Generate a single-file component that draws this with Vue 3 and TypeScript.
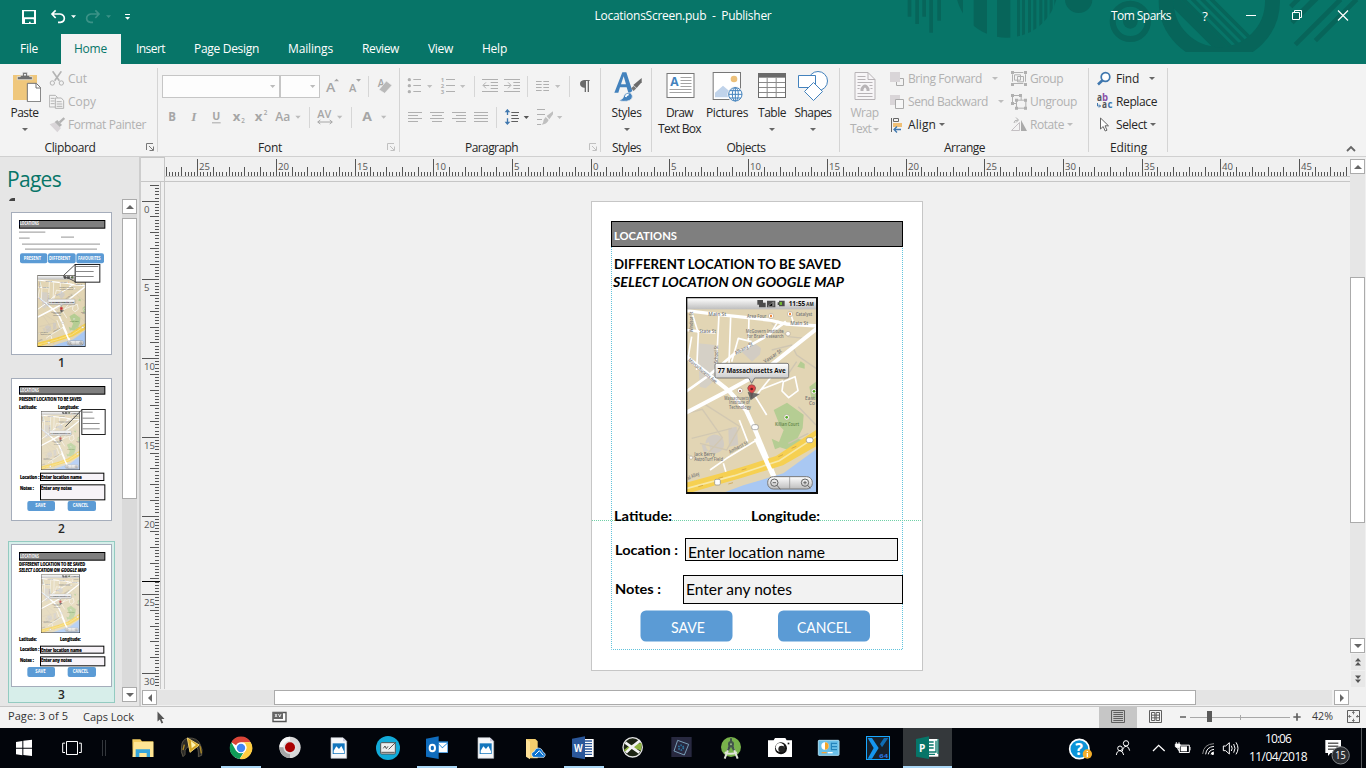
<script setup lang="ts">
import { computed } from 'vue'

/** Spreads the letters of a label so that it takes exactly the given width. */
const vFit = {
  mounted(el: HTMLElement, binding: { value: number }) {
    const chars = (el.textContent ?? '').trim().length
    el.style.letterSpacing = '0px'
    const natural = el.getBoundingClientRect().width
    el.style.letterSpacing = `${(binding.value - natural) / chars}px`
  },
}

/** Lets every measured text inside an svg scale its glyphs rather than only the gaps. */
const vGlyphs = {
  mounted(el: SVGElement) {
    el.querySelectorAll('text[textLength]').forEach((t) => t.setAttribute('lengthAdjust', 'spacingAndGlyphs'))
  },
}

interface Tick { pos: number; kind: 'major' | 'unit' | 'minor'; label: string }

const UNIT = 15.74
function buildTicks(zero: number, from: number, to: number): Tick[] {
  const out: Tick[] = []
  for (let k = Math.ceil((from - zero) / (UNIT / 5)); zero + (k * UNIT) / 5 < to; k++) {
    const major = k % 25 === 0
    out.push({
      pos: Math.floor(zero + (k * UNIT) / 5),
      kind: major ? 'major' : k % 5 === 0 ? 'unit' : 'minor',
      label: major ? String(Math.abs(k / 5)) : '',
    })
  }
  return out
}
const hTicks = computed(() => buildTicks(591.2, 165, 1348))
const vTicks = computed(() => buildTicks(201.2, 183, 687))
const hTop = { major: 159, unit: 167, minor: 172 }
const vLeft = { major: 142, unit: 150, minor: 155 }

const tabs = [
  { name: 'Insert', w: 29 },
  { name: 'Page Design', w: 65 },
  { name: 'Mailings', w: 45 },
  { name: 'Review', w: 37 },
  { name: 'View', w: 25 },
  { name: 'Help', w: 25 },
]
const stripes = [351, 366, 384, 400, 418, 433, 449, 463]
</script>

<template>
  <div class="app">
    <header class="top">
      <svg class="art" width="466" height="64" viewBox="0 0 1398 192">
        <defs>
          <clipPath id="ball"><circle cx="320" cy="-41" r="154" /></clipPath>
          <clipPath id="hoop"><circle cx="958" cy="4" r="138" /></clipPath>
          <clipPath id="band"><rect x="0" y="0" width="1398" height="156" /></clipPath>
        </defs>
        <g fill="#07655a">
          <rect x="23" width="11" height="50" /><rect x="46" width="11" height="72" />
          <rect x="67" width="11" height="50" /><rect x="88" width="11" height="98" />
          <rect x="112" width="11" height="62" />
          <g clip-path="url(#ball)">
            <rect x="163" width="26" height="120" /><rect x="221" width="40" height="120" />
            <rect x="291" width="40" height="120" />
            <rect v-for="x in stripes" :key="x" :x="x" width="9" height="120" />
          </g>
          <circle cx="536" cy="-2" r="41" />
          <circle cx="691" cy="64" r="22" />
        </g>
        <g fill="none" stroke="#07655a" clip-path="url(#band)">
          <circle cx="691" cy="64" r="53" stroke-width="18" />
          <circle cx="958" cy="4" r="159.500" stroke-width="45" />
          <g clip-path="url(#hoop)" stroke-width="11">
            <path d="M800 -20l170 170" stroke-width="34" />
            <path d="M822 -30l190 190M850 -30l190 190M878 -30l190 190M906 -30l190 190" />
          </g>
          <path d="M1172 20l28-28M1178 62l64-64M1186 134l136-136M1176 68l90-88M1246 122l124-124" stroke-width="14" />
        </g>
      </svg>
      <div class="titlebar">
        <svg class="qat" width="120" height="32" viewBox="54 0 360 96">
          <path d="M66 30h42v42h-42zM72 34v18h30v-18zM75 58v11h6v-7h14v7h6v-11z" fill="#fff" fill-rule="evenodd" />
          <path d="M81 69h6v-4h5v4h9v-10h-26v10z" fill="#077568" />
          <g fill="none" stroke="#fff" stroke-width="5">
            <path d="M156 42h24q13 2 13 13t-12 12h-7M167 31l-11 11 11 12" />
            <path d="M297 42h-24q-13 2-13 13t12 12h7M286 31l11 11-11 12" stroke="#3b9287" />
          </g>
          <path d="M213 46h15l-7 8z" fill="#fff" /><path d="M318 46h15l-7 8z" fill="#3b9287" />
          <path d="M375 42h15v3h-15zM375 51h15l-7 8z" fill="#fff" />
        </svg>
        <div class="title"><span v-fit="177">LocationsScreen.pub&nbsp; -&nbsp; Publisher</span></div>
        <div class="window">
          <span class="user"><span v-fit="60">Tom Sparks</span></span>
          <span class="wbtn q">?</span>
          <svg class="wbtn" width="46" height="32"><path d="M18 15.500h10" stroke="#fff" /></svg>
          <svg class="wbtn" width="46" height="32"><path d="M18.500 12.500h7v7h-7zM20.500 12v-1.500h7v7h-1.500" stroke="#fff" fill="none" /></svg>
          <svg class="wbtn" width="46" height="32"><path d="M18 10.500l10 10M28 10.500l-10 10" stroke="#fff" stroke-width="1.200" /></svg>
        </div>
      </div>
      <nav class="tabs">
        <span class="file"><span v-fit="18">File</span></span>
        <span class="home"><span v-fit="33">Home</span></span>
        <span v-for="t in tabs" :key="t.name" class="tab"><span v-fit="t.w">{{ t.name }}</span></span>
      </nav>
    </header>

    <section class="ribbon">
      <div class="group g-clip">
        <div class="body">
          <div class="big paste">
            <svg width="32" height="32" viewBox="27 210 96 96">
              <rect x="39" y="225" width="72" height="75" fill="#efc77c" />
              <path d="M52 239v-9h9v-4h7v-9h14v9h7v4h8v9z" fill="#6e6e6e" stroke="#f3f3f3" stroke-width="2" />
              <circle cx="75" cy="224" r="3" fill="#fff" />
              <path d="M82 250h27l13 13v42h-40z" fill="#fff" stroke="#737373" stroke-width="3" />
              <path d="M108 250v14h14" fill="none" stroke="#737373" stroke-width="3" />
            </svg>
            <span class="lab"><span v-fit="28">Paste</span></span>
            <span class="sub"><i class="arr"></i></span>
          </div>
          <div class="rows off">
            <div class="row">
              <svg width="16" height="16" viewBox="147 211 48 48"><path d="M158 212l20 28M184 212l-20 28" stroke="#b3b3b3" stroke-width="5" /><circle cx="157" cy="247" r="6.500" fill="none" stroke="#b3b3b3" stroke-width="3" /><circle cx="184" cy="247" r="6.500" fill="none" stroke="#b3b3b3" stroke-width="3" /></svg>
              <span v-fit="19">Cut</span>
            </div>
            <div class="row">
              <svg width="16" height="16" viewBox="147 280 48 48" fill="#f3f3f3" stroke="#b3b3b3" stroke-width="3"><path d="M148 284h18l6 6v29h-24zM152 293h12M152 301h12M152 309h12" /><path d="M166 292h18l7 8v23h-25zM170 303h15M170 310h17M170 317h17" /></svg>
              <span v-fit="28">Copy</span>
            </div>
            <div class="row">
              <svg width="16" height="16" viewBox="147 348 48 48"><path d="M149 370l16-6 18 17-11 13z" fill="#d9d5d8" /><path d="M164 363l8-6 14 15-7 6z" fill="#b3b3b3" /><path d="M179 364l14-13" stroke="#b3b3b3" stroke-width="7" /></svg>
              <span v-fit="78">Format Painter</span>
            </div>
          </div>
        </div>
        <div class="cap"><span class="ct"><span v-fit="51">Clipboard</span></span>
          <svg width="18" height="12" viewBox="-6 -1 18 12" fill="none" stroke="#777"><path d="M.5 7v-6.500h6.500M3 3l4 4M7.500 3.500v4h-4" /></svg></div>
      </div>

      <div class="group g-font">
        <div class="body">
          <svg v-glyphs width="241" height="76" viewBox="474 192 723 228" class="strip">
            <rect x="487.500" y="226.500" width="351" height="66" fill="#fdfdfd" stroke="#c6c6c6" stroke-width="3" />
            <rect x="841.500" y="226.500" width="117" height="66" fill="#fdfdfd" stroke="#c6c6c6" stroke-width="3" />
            <path d="M1105.500 228v63M928.500 321v63M1054.500 321v63" stroke="#d6d6d6" stroke-width="3" />
            <g fill="#bcbcbc"><path d="M810 255h16l-8 9zM930 255h16l-8 9zM886 347h16l-8 9zM1011 347h16l-8 9zM1143 347h16l-8 9z" /></g>
            <g fill="#a6a6a6" font-weight="600">
              <text x="978" y="276" font-size="40" textLength="28">A</text>
              <path d="M1002 244h15l-7-8zM1068 237h15l-7 8z" />
              <text x="1047" y="276" font-size="32" textLength="22">A</text>
              <text x="1133" y="262" font-size="32" textLength="20">A</text>
              <path d="M1137 269l22-26 17 13-22 24z" fill="#b9b9b9" stroke="#f3f3f3" stroke-width="2" />
              <text x="505" y="363" font-size="36" font-weight="700" textLength="23">B</text>
              <text x="574" y="363" font-size="40" font-style="italic" class="serif">I</text>
              <text x="637" y="361" font-size="34" font-weight="700" textLength="24">U</text>
              <path d="M636 368.500h26" stroke="#a6a6a6" stroke-width="3" />
              <text x="698" y="364" font-size="38" font-weight="700" textLength="23">x</text><text x="724" y="369" font-size="19">2</text>
              <text x="764" y="364" font-size="38" font-weight="700" textLength="23">x</text><text x="791" y="346" font-size="19">2</text>
              <text x="826" y="363" font-size="36" textLength="45">Aa</text>
              <text x="952" y="355" font-size="33" textLength="42">AV</text>
              <path d="M954 366h42M961 360l-8 6 8 6M989 360l8 6-8 6" fill="none" stroke="#a6a6a6" stroke-width="3" />
              <text x="1087" y="363" font-size="39" font-weight="700" textLength="29">A</text>
            </g>
          </svg>
        </div>
        <div class="cap"><span class="ct"><span v-fit="24">Font</span></span>
          <svg width="18" height="12" viewBox="-5 -1 18 12" fill="none" stroke="#c0c0c0"><path d="M.5 7v-6.500h6.500M3 3l4 4M7.500 3.500v4h-4" /></svg></div>
      </div>

      <div class="group g-para">
        <div class="body">
          <svg width="200" height="76" viewBox="0 12 600 228" class="strip">
            <g fill="#b0b0b0">
              <circle cx="28" cy="59" r="5" /><circle cx="28" cy="77" r="5" /><circle cx="28" cy="95" r="5" />
              <g font-size="18" font-weight="700"><text x="122" y="65">1</text><text x="122" y="83">2</text><text x="122" y="101">3</text></g>
            </g>
            <g stroke="#b0b0b0" stroke-width="3" fill="none">
              <path d="M40 58.500h23M40 76.500h23M40 94.500h23M138 58.500h27M138 76.500h27M138 94.500h27" />
              <path d="M246 58.500h48M272 67.500h22M272 76.500h22M272 85.500h22M246 94.500h48M250 76.500h18M258 67l-9 9 9 9" />
              <path d="M312 58.500h48M340 67.500h20M340 76.500h20M340 85.500h20M312 94.500h48M312 76.500h20M324 67l9 9-9 9" />
              <path d="M408 64.500h17M430 64.500h17M408 73.500h17M430 73.500h17M408 82.500h17M430 82.500h17M408 91.500h17M430 91.500h17" />
              <path d="M24 157.500h42M24 166.500h30M24 175.500h42M24 184.500h30M90 157.500h42M96 166.500h30M90 175.500h42M96 184.500h30M156 157.500h42M168 166.500h30M156 175.500h42M168 184.500h30M222 157.500h42M222 166.500h42M222 175.500h42M222 184.500h42" />
              <path d="M411 148.500h24M411 163.500h24M411 178.500h15M411 193.500h12" />
              <path d="M223.500 48v63M382.500 48v63M508.500 48v63M289.500 141v63" stroke="#d6d6d6" />
              <path d="M334 157.500h23M334 166.500h20M334 175.500h23M334 184.500h20" stroke="#5f5f5f" />
              <path d="M322.500 149v16M322.500 175v16" stroke="#3f77ae" stroke-width="4" />
            </g>
            <path d="M314 157l8-10 9 10zM314 185l8 10 9-10z" fill="#3f77ae" />
            <path d="M459 154l-19 14 8 10 11-15zM437 171l9 9q-6 14-22 14 7-6 7-15z" fill="#bfbfbf" />
            <path d="M81 75h16l-8 9zM180 75h16l-8 9zM465 75h16l-8 9zM471 168h16l-8 9z" fill="#c0c0c0" />
            <path d="M371 168h16l-8 9z" fill="#555" />
            <path d="M569 60h-17q-12 2-12 11t12 12h2v13h4v-33h5v33h4v-33h2z" fill="#6a6a6a" />
          </svg>
        </div>
        <div class="cap"><span class="ct"><span v-fit="53">Paragraph</span></span>
          <svg width="18" height="12" viewBox="-6 -1 18 12" fill="none" stroke="#c0c0c0"><path d="M.5 7v-6.500h6.500M3 3l4 4M7.500 3.500v4h-4" /></svg></div>
      </div>

      <div class="group g-styles">
        <div class="body center">
          <div class="big">
            <svg width="32" height="32" viewBox="631 30 96 96">
              <path d="M641 98l24-61h12l18 56-11 8-6-19h-20l-5 16zM661 73h15l-7-24z" fill="#4382bd" fill-rule="evenodd" />
              <path d="M723 54v13l-15 17-10-9z" fill="#6b6b6b" /><path d="M699 78l8 7-8 8-8-8z" fill="#777" />
              <path d="M655 122q14-5 15-16 8-12 20-7 9 9 3 17-11 12-38 6z" fill="#4382bd" stroke="#f3f3f3" stroke-width="2" />
              <path d="M675 111q2-8 9-7" stroke="#fff" stroke-width="5" fill="none" />
            </svg>
            <span class="lab"><span v-fit="30">Styles</span></span>
            <span class="sub"><i class="arr"></i></span>
          </div>
        </div>
        <div class="cap"><span class="ct"><span v-fit="29">Styles</span></span></div>
      </div>

      <div class="group g-obj">
        <div class="body">
          <div class="big b47">
            <svg v-glyphs width="32" height="32" viewBox="790.500 30 96 96">
              <rect x="799.500" y="40.500" width="81" height="72" fill="#fff" stroke="#777" stroke-width="3" />
              <path d="M840 52.500h33M840 61.500h33M840 70.500h33M840 79.500h33M807 88.500h66M807 97.500h66" stroke="#a3a3a3" stroke-width="3" />
              <text x="809" y="78" font-size="36" font-weight="700" fill="#4382bd" textLength="25">A</text>
            </svg>
            <span class="lab"><span v-fit="27">Draw</span></span><span class="sub"><span v-fit="43">Text Box</span></span>
          </div>
          <div class="big b48">
            <svg width="32" height="32" viewBox="933 30 96 96">
              <rect x="939.500" y="37.500" width="82" height="81" fill="#fff" stroke="#777" stroke-width="3" />
              <circle cx="1002" cy="57" r="10" fill="#ecc07a" />
              <path d="M945 112v-14l24-21 16 14 9-5v26z" fill="#c0d3ea" />
              <circle cx="1006" cy="103" r="24" fill="#f3f3f3" />
              <g fill="#fff" stroke="#4382bd" stroke-width="3"><circle cx="1006" cy="103" r="20" /><ellipse cx="1006" cy="103" rx="9" ry="20" /><path d="M986 103h40M990 92h32M990 114h32M1006 83v40" /></g>
            </svg>
            <span class="lab"><span v-fit="42">Pictures</span></span><span class="sub"></span>
          </div>
          <div class="big b42">
            <svg width="32" height="32" viewBox="1068 30 96 96">
              <rect x="1075.500" y="40.500" width="81" height="72" fill="#fff" stroke="#6b6b6b" stroke-width="3" />
              <rect x="1074" y="39" width="84" height="14" fill="#6b6b6b" />
              <path d="M1077 67.500h78M1077 82.500h78M1077 97.500h78M1101.500 53v58M1128.500 53v58" stroke="#8a8a8a" stroke-width="3" />
            </svg>
            <span class="lab"><span v-fit="28">Table</span></span><span class="sub"><i class="arr"></i></span>
          </div>
          <div class="big b40">
            <svg width="32" height="32" viewBox="797 70 32 32" fill="#fff" stroke="#4382bd">
              <circle cx="818" cy="81" r="9.500" /><path d="M798.500 75.500h17v12h-17z" /><path d="M813.500 82.500l9 9-9 9-9-9z" />
            </svg>
            <span class="lab"><span v-fit="37">Shapes</span></span><span class="sub"><i class="arr"></i></span>
          </div>
        </div>
        <div class="cap"><span class="ct"><span v-fit="39">Objects</span></span></div>
      </div>

      <div class="group g-arr">
        <div class="body">
          <div class="big b41 off">
            <svg width="32" height="32" viewBox="848.500 70 32 32" fill="none" stroke="#b7b3b6">
              <path d="M854.500 72.500h13l7 7v20h-20z" fill="#f7f5f7" /><path d="M867.500 72.500v7h7M857 76.500h8M857 79.500h8M857 82.500h15M857 85.500h3M869 85.500h3M857 88.500h2M870 88.500h2M857 93.500h15M857 96.500h15" />
              <path d="M861.500 91v-2q3-6 6 0v2" stroke-width="3" />
            </svg>
            <span class="lab"><span v-fit="28">Wrap</span></span><span class="sub"><span v-fit="21">Text</span><i class="arr inl"></i></span>
          </div>
          <div class="rows c1">
            <div class="row off">
              <svg width="16" height="16"><path d="M1 1h10v10h-10z" fill="#d9d5d8" /><path d="M11 7.500h3.500v7h-7v-3.500" fill="none" stroke="#aaa" /></svg>
              <span v-fit="74">Bring Forward</span><i class="arr gap"></i>
            </div>
            <div class="row off">
              <svg width="16" height="16"><path d="M1 1h10v10h-10z" fill="#d9d5d8" /><path d="M6.500 5.500h8v9h-8z" fill="#f7f7f7" stroke="#aaa" /></svg>
              <span v-fit="80">Send Backward</span><i class="arr gap"></i>
            </div>
            <div class="row">
              <svg width="16" height="16"><path d="M2.500 1v14M4.500 1.500h5v3h-5z" stroke="#666" fill="none" /><path d="M4 6h9v4h-9z" fill="#efc077" /><path d="M5 12.500h7M8 9.500l-3 3 3 3" stroke="#3f77ae" fill="none" stroke-width="1.300" /></svg>
              <span v-fit="28">Align</span><i class="arr"></i>
            </div>
          </div>
          <div class="rows c2 off">
            <div class="row">
              <svg width="18" height="16" viewBox="30 21 54 48" fill="none" stroke="#b0b0b0" stroke-width="3"><path d="M42 25.500h28M42 58.500h28M37.500 31v22M76.500 31v22M43.500 32.500h18v16h-18zM52.500 37.500h18v16h-18z" /><path d="M33 18h9v9h-9zM72 18h9v9h-9zM33 54h9v9h-9zM72 54h9v9h-9z" transform="translate(0 3)" fill="#b0b0b0" stroke="none" /></svg>
              <span v-fit="33">Group</span>
            </div>
            <div class="row">
              <svg width="18" height="16" viewBox="30 87 54 48" fill="none" stroke="#b0b0b0" stroke-width="3"><path d="M37.500 91.500h26v24h-26z" /><path d="M49.500 105.500h28v24h-28z" fill="#f3f3f3" /><path d="M33 87h9v9h-9zM57 87h9v9h-9zM33 111h9v9h-9zM45 101h9v9h-9zM72 101h9v9h-9zM45 125h9v9h-9zM72 125h9v9h-9z" fill="#b0b0b0" stroke="none" /></svg>
              <span v-fit="47">Ungroup</span>
            </div>
            <div class="row">
              <svg width="18" height="16"><path d="M1.500 13.500h8v-8z" fill="none" stroke="#c4c0c3" /><path d="M11 3v11h6z" fill="#aaa" /><path d="M4 6q0-3 4-3M6 .5l2.500 2.500-2.500 2.500" fill="none" stroke="#b0b0b0" /></svg>
              <span v-fit="34">Rotate</span><i class="arr"></i>
            </div>
          </div>
        </div>
        <div class="cap"><span class="ct"><span v-fit="41">Arrange</span></span></div>
      </div>

      <div class="group g-edit">
        <div class="body">
          <div class="rows">
            <div class="row"><svg width="18" height="16"><circle cx="9.500" cy="6" r="4.300" fill="#fff" stroke="#3f77ae" stroke-width="1.700" /><path d="M6.500 9.200l-4.500 4.300" stroke="#3f77ae" stroke-width="2.600" /></svg><span v-fit="23">Find</span><i class="arr gap"></i></div>
            <div class="row"><svg v-glyphs width="18" height="20" font-weight="700" font-size="11"><text x="1" y="9" fill="#555" textLength="5">a</text><text x="6" y="9" fill="#8a4fa8" textLength="6">b</text><text x="6" y="16" fill="#555" textLength="5">a</text><text x="11.500" y="16" fill="#3f77ae" textLength="5">c</text><path d="M1.500 11v3h3M3 12.500l1.500 1.500-1.500 1.500" fill="none" stroke="#3f77ae" /></svg><span v-fit="41">Replace</span></div>
            <div class="row"><svg width="18" height="16"><path d="M4.500 1v11l2.700-2.500 2 4.500 1.800-.8-2-4.400h3.500z" fill="#fff" stroke="#666" /></svg><span v-fit="31">Select</span><i class="arr"></i></div>
          </div>
        </div>
        <div class="cap"><span class="ct"><span v-fit="37">Editing</span></span></div>
      </div>
      <div class="tail"><svg width="12" height="9"><path d="M2 7l4-4 4 4" fill="none" stroke="#666" stroke-width="1.800" /></svg></div>
    </section>

    <main class="work">
      <aside class="pages">
        <div class="plist">
          <h2><span v-fit="54">Pages</span></h2>
          <svg class="mark" width="10" height="5"><path d="M1 4q1-3 4-3h2v3z" fill="#444" /></svg>
          <div class="thumb">
            <svg v-glyphs width="101" height="143" viewBox="33 171 303 429" font-weight="700">
              <rect x="34.500" y="172.500" width="300" height="426" fill="#fff" stroke="#a5adbb" stroke-width="3" />
              <rect x="58.500" y="196.500" width="256" height="23" fill="#7f7f7f" stroke="#000" stroke-width="3" />
              <text x="60" y="211" font-size="14" fill="#fff" textLength="56">LOCATIONS</text>
              <path d="M57 231.500h79M57 249.500h32M183 246.500h39M66 267.500h234M75 282.500h216" stroke="#aaa" stroke-width="3.500" />
              <g fill="#5b9bd5"><rect x="60" y="295" width="82" height="30" rx="6" /><rect x="144" y="295" width="83" height="30" rx="6" /><rect x="229" y="295" width="83" height="30" rx="6" /></g>
              <g font-size="14" fill="#fff"><text x="71" y="314" textLength="52">PRESENT</text><text x="147" y="314" textLength="64">DIFFERENT</text><text x="234" y="314" textLength="68">FAVOURITES</text></g>
              <use href="#map" x="112" y="360" width="145" height="216" />
              <path d="M225 329l-35 33 40 20" fill="none" stroke="#555" stroke-width="3" />
              <rect x="225.500" y="328.500" width="74" height="53" fill="#fff" stroke="#222" stroke-width="3" />
              <path d="M227 334.500h68M228 349.500h53M228 364.500h53" stroke="#888" stroke-width="3" />
            </svg>
            <b>1</b>
          </div>
          <div class="thumb">
            <svg v-glyphs width="101" height="143" viewBox="33 -156 303 429" font-weight="700">
              <rect x="34.500" y="-154.500" width="300" height="426" fill="#fff" stroke="#a5adbb" stroke-width="3" />
              <rect x="58.500" y="-130.500" width="256" height="23" fill="#7f7f7f" stroke="#000" stroke-width="3" />
              <text x="60" y="-115" font-size="14" fill="#fff" textLength="56">LOCATIONS</text>
              <g font-size="13" class="heavy"><text x="57" y="-87" textLength="188">PRESENT LOCATION TO BE SAVED</text><text x="57" y="-64" textLength="53">Latitude:</text><text x="174" y="-64" textLength="62">Longitude:</text></g>
              <use href="#map" x="123" y="-57" width="117" height="177" opacity=".8" />
              <path d="M245 -60l-49 50" stroke="#555" stroke-width="3" />
              <rect x="245.500" y="-61.500" width="70" height="75" fill="#fff" stroke="#222" stroke-width="3" />
              <path d="M247 -53.500h31M247 -35.500h36M247 -19.500h52M247 -3.500h52" stroke="#888" stroke-width="3" />
              <g fill="#f7f3f8" stroke="#000" stroke-width="3"><rect x="121.500" y="129.500" width="190" height="22" /><rect x="121.500" y="164.500" width="193" height="45" /></g>
              <g font-size="13" class="heavy"><text x="60" y="146" textLength="58">Location :</text><text x="60" y="179" textLength="42">Notes :</text><text x="123" y="147" textLength="122">Enter location name</text><text x="123" y="179" textLength="92">Enter any notes</text></g>
              <g fill="#5b9bd5"><rect x="82" y="213" width="83" height="30" rx="6" /><rect x="203" y="213" width="85" height="30" rx="6" /></g>
              <g font-size="14" fill="#fff"><text x="106" y="232" textLength="31">SAVE</text><text x="218" y="232" textLength="47">CANCEL</text></g>
            </svg>
            <b>2</b>
          </div>
          <div class="thumb sel">
            <svg v-glyphs width="101" height="143" viewBox="33 342 303 429" font-weight="700">
              <rect x="34.500" y="343.500" width="300" height="426" fill="#fff" stroke="#a5adbb" stroke-width="3" />
              <rect x="58.500" y="367.500" width="256" height="23" fill="#7f7f7f" stroke="#000" stroke-width="3" />
              <text x="60" y="384" font-size="14" fill="#fff" textLength="56">LOCATIONS</text>
              <g font-size="13" class="heavy"><text x="57" y="407" textLength="198">DIFFERENT LOCATION TO BE SAVED</text><text x="57" y="425" font-style="italic" textLength="202">SELECT LOCATION ON GOOGLE MAP</text><text x="57" y="633" textLength="53">Latitude:</text><text x="180" y="633" textLength="62">Longitude:</text></g>
              <use href="#map" x="123" y="433" width="117" height="176" opacity=".8" />
              <g fill="#f7f3f8" stroke="#000" stroke-width="3"><rect x="121.500" y="648.500" width="190" height="21" /><rect x="121.500" y="680.500" width="193" height="27" /></g>
              <g font-size="13" class="heavy"><text x="60" y="662" textLength="58">Location :</text><text x="60" y="697" textLength="42">Notes :</text><text x="123" y="665" textLength="122">Enter location name</text><text x="123" y="697" textLength="92">Enter any notes</text></g>
              <g fill="#5b9bd5"><rect x="82" y="711" width="83" height="30" rx="6" /><rect x="203" y="711" width="85" height="30" rx="6" /></g>
              <g font-size="14" fill="#fff"><text x="106" y="730" textLength="31">SAVE</text><text x="218" y="730" textLength="47">CANCEL</text></g>
            </svg>
            <b>3</b>
          </div>
        </div>
        <div class="pscroll">
          <span class="sbtn"><i class="up"></i></span>
          <div class="ptrack"><div class="pthumb"></div></div>
          <span class="sbtn"><i class="down"></i></span>
        </div>
      </aside>

      <div class="editor">
        <svg class="hruler" width="1209" height="25" viewBox="141 157 1209 25" shape-rendering="crispEdges">
          <path d="M141 157.500h24M164.500 157v25M141 181.500h1209M165 176.500h1185" stroke="#c6c6c6" fill="none" />
          <path v-for="(t, i) in hTicks" :key="i" :d="`M${t.pos + 0.5} ${hTop[t.kind]}V176`" stroke="#555" />
          <text v-for="(t, i) in hTicks.filter((x) => x.label)" :key="'l' + i" :x="t.pos + 2" y="169.500" font-size="9.600" fill="#555">{{ t.label }}</text>
        </svg>
        <div class="mid">
          <svg class="vruler" width="24" height="507" viewBox="141 182 24 507" shape-rendering="crispEdges">
            <path d="M160.500 182v507M164.500 182v507" stroke="#c6c6c6" />
            <path v-for="(t, i) in vTicks" :key="i" :d="`M${vLeft[t.kind]} ${t.pos + 0.5}H159`" stroke="#555" />
            <path d="M142 581.500h18" stroke="#000" />
            <text v-for="(t, i) in vTicks.filter((x) => x.label)" :key="'l' + i" x="144" :y="t.pos + 12" font-size="9.600" fill="#555">{{ t.label }}</text>
          </svg>
          <div class="canvas">
            <svg v-glyphs class="sheet" width="332" height="470" viewBox="591 201 332 470">
              <defs>
                <linearGradient id="bar" x1="0" y1="0" x2="0" y2="1"><stop offset="0" stop-color="#fff" /><stop offset="1" stop-color="#bdbdbd" /></linearGradient>
              </defs>
              <symbol id="map" viewBox="303 321 396 591" preserveAspectRatio="none">
                <rect x="303" y="321" width="396" height="591" fill="#e2d5b4" />
                <path d="M338 460l52 5-3 30 25 55-50 45-18-5z" fill="#d5d0c6" />
                <path d="M470 485l30-32 28 22-3 18-24 22zM350 765l22-8 4 24-20 6zM398 735a28 28 0 1 0 3 52 28 28 0 0 0-3-52zM430 715l25-5 5 55-28 5z" fill="#d2ccc3" />
                <path d="M307 670l45-12 60 85-65 70-40-20M355 640l110 70-40 70-80-20M320 745l120-30" fill="none" stroke="#d2c8b2" stroke-width="4" />
                <path d="M566 660l40-22 50 36-3 40-16 32 17 4-44 30-25-8-15 6-10-32 22 10 14-36-10-10z" fill="#b5cd93" />
                <path d="M637 530l10-16 12 8v14zM693 575l-20 15 6 35 14 5z" fill="#b5cd93" />
                <g fill="none" stroke="#cfc6b2" stroke-width="4"><path d="M560 480l60-15 15 30 58 40M590 580l45-65M610 760l60-30M640 650l53 55M560 400l50 40 50 5" /></g>
                <g fill="none" stroke="#fff" stroke-linejoin="round">
                  <path d="M303 362l100 12 150 16 50 12 96 6" stroke-width="10" />
                  <path d="M303 668l130-68 100-55 166-132" stroke-width="12" />
                  <path d="M303 605l70-50 70-60 90-50 70-50M303 420l46 5 42 2" stroke-width="8" />
                  <path d="M303 500l128 102 52 58 30 66 62 150" stroke-width="13" />
                  <path d="M320 365l20 65-5 110M402 372l-10 200M437 382l-5 140M492 380l-2 75M320 440l-12 70M580 392l-30 50M618 375l10 30M500 455l-40-10-20 70" stroke-width="5" />
                  <path d="M505 610l40 65M525 600l70-28M595 575l35-15 9 42-28 21-20-20zM463 690l25 65M375 840l50-35 90-55M415 820l12 40M515 615l50-62" stroke-width="5" />
                </g>
                <path d="M303 878l110-30 75-22 85-28 126-82v50l-105 60-125 38-85 24-81 24z" fill="#f6d051" />
                <path d="M303 896l145-39 135-45 116-76" fill="none" stroke="#f7e8a7" stroke-width="5" />
                <path d="M405 912l70-26 120-36 104-76v138z" fill="#a9c8f3" />
                <path d="M513 745l59 130" stroke="#fff" stroke-width="13" />
                <g stroke="#c7983f" stroke-width="2"><path d="M400 865l14-4M470 840l14-4M580 800l14-6M620 775l14-6M430 882l14-4M340 890l14-4" /></g>
                <g fill="#777" font-size="16" font-weight="600">
                  <text x="370" y="379" textLength="54">Main St</text><text x="486" y="384" textLength="58">Area Four</text><text x="632" y="379" textLength="50">Catalyst</text>
                  <text x="616" y="404" textLength="54">Main St</text><text x="343" y="428" textLength="50">State St</text><text x="482" y="428" textLength="114">McGovern Institute</text><text x="486" y="443" textLength="110">for Brain Research</text>
                  <text x="418" y="629" textLength="76">Massachusetts</text><text x="432" y="643" textLength="62">Institute of</text><text x="432" y="658" textLength="66">Technology</text>
                  <text x="570" y="709" textLength="72" fill="#608345">Killian Court</text><text x="328" y="799" textLength="62">Jack Berry</text><text x="328" y="814" textLength="86">AstroTurf Field</text><text x="660" y="629" textLength="30">East</text><text x="672" y="645" textLength="18">Co</text>
                  <text transform="translate(453 495) rotate(-30)" textLength="60">Albany St</text><text transform="translate(540 520) rotate(-34)" textLength="62">Vassar St</text><text transform="translate(308 512) rotate(40)" textLength="108">Massachusetts Ave</text>
                  <text transform="translate(324 427) rotate(-90)" textLength="62">Windsor St</text><text transform="translate(398 520) rotate(-90)" textLength="54">School St</text><text transform="translate(435 791) rotate(-28)" textLength="62">Amherst St</text><text transform="translate(310 870) rotate(-24)" textLength="38">al Alley</text>
                </g>
                <g fill="#fff" stroke="#b5aa95" stroke-width="2"><circle cx="558" cy="378" r="8" /><circle cx="615" cy="372" r="8" /><circle cx="609" cy="431" r="7" /><circle cx="465" cy="602" r="8" /><circle cx="605" cy="682" r="8" /><circle cx="687" cy="604" r="8" /><circle cx="318" cy="803" r="5" /><rect x="389" y="868" width="17" height="17" rx="4" stroke="#888" /><rect x="500" y="704" width="20" height="15" rx="6" stroke="#888" /><rect x="664" y="743" width="20" height="15" rx="6" stroke="#888" /></g>
                <g fill="#ee8b3e"><path d="M555 374h6v8h-6zM612 368h6v8h-6z" /><circle cx="465" cy="603" r="3" fill="#8b3c33" /><circle cx="605" cy="682" r="4" fill="#4ea51d" /><circle cx="687" cy="604" r="4" fill="#4ea51d" /></g>
                <path d="M488 594q2-10 12-10t12 10q0 7-9 16l-3 14-3-14q-9-9-9-16z" fill="#e04545" stroke="#79494a" stroke-width="2" />
                <circle cx="500" cy="597" r="4" fill="#661d1d" /><path d="M488 606l36 6-27 19z" fill="#555" opacity=".85" />
                <path d="M395 520h211q5 0 5 5v34q0 5-5 5h-97l-9 16-9-16h-96q-5 0-5-5v-34q0-5 5-5z" fill="url(#bar)" stroke="#666" stroke-width="2.500" />
                <text x="398" y="549" font-size="20" font-weight="700" fill="#111" textLength="204">77 Massachusetts Ave</text>
                <rect x="303" y="324" width="396" height="34" fill="url(#bar)" />
                <path d="M517 330h17v8h8v14h-20v-8h-5zM546 332h25v20h-25zM578 337h4v-5h17v17h-17v-4h-4z" fill="#4b4b4b" /><path d="M549 349l14-12v12zM566 349v-14" stroke="#aaa" stroke-width="2" /><rect x="584" y="336" width="7" height="9" fill="#72b832" />
                <text x="611" y="349" font-size="20" font-weight="700" fill="#111" textLength="50">11:55</text><text x="664" y="349" font-size="13" font-weight="700" fill="#222" textLength="22">AM</text>
                <rect x="548" y="860" width="134" height="37" rx="17" fill="url(#bar)" stroke="#777" stroke-width="3" /><path d="M614 861v35" stroke="#888" stroke-width="2" />
                <g fill="none" stroke="#666" stroke-width="3"><circle cx="568" cy="878" r="11" /><path d="M576 886l10 12M563 878h10" /><circle cx="660" cy="878" r="11" /><path d="M668 886l8 9M655 878h10M660 873v10" /></g>
                <path d="M303 321h396v591h-396zM307 325v581h386v-581z" fill="#0b0b0b" fill-rule="evenodd" />
              </symbol>
              <rect x="591.500" y="201.500" width="331" height="469" fill="#fff" stroke="#c6c6c6" />
              <path d="M611.500 221v428.500h291v-428.500" fill="none" stroke="#62c3dc" stroke-dasharray="1 1" />
              <path d="M592 520.500h330" stroke="#6fd0a7" stroke-dasharray="1 1" />
              <rect x="611.500" y="221.500" width="291" height="25" fill="#7f7f7f" stroke="#000" />
              <use href="#map" x="686" y="297" width="132" height="197" />
              <g class="pub" font-weight="700">
                <text x="614" y="240" font-size="11.500" fill="#fff" textLength="63">LOCATIONS</text>
                <text x="614" y="268.500" font-size="13.800" textLength="227">DIFFERENT LOCATION TO BE SAVED</text>
                <text x="613" y="287" font-size="13.800" font-style="italic" textLength="231">SELECT LOCATION ON GOOGLE MAP</text>
                <text x="614" y="521" font-size="13.800" textLength="58">Latitude:</text>
                <text x="751" y="521" font-size="13.800" textLength="69">Longitude:</text>
                <text x="615" y="555" font-size="13.800" textLength="63">Location :</text>
                <text x="615" y="594" font-size="13.800" textLength="46">Notes :</text>
              </g>
              <g fill="#f2f2f2" stroke="#000"><rect x="685.500" y="538.500" width="212" height="22" /><rect x="683.500" y="575.500" width="219" height="28" /></g>
              <g fill="#5b9bd5"><rect x="640.500" y="610.500" width="92" height="31" rx="5.500" /><rect x="778" y="610.500" width="92" height="31" rx="5.500" /></g>
              <g class="pub" font-size="15.500">
                <text x="688" y="558" textLength="137">Enter location name</text>
                <text x="686" y="595" textLength="106">Enter any notes</text>
                <text x="671" y="633" fill="#fff" textLength="34">SAVE</text>
                <text x="797" y="633" fill="#fff" textLength="54">CANCEL</text>
              </g>
            </svg>
          </div>
        </div>
        <div class="hscroll">
          <span class="sbtn"><i class="left"></i></span>
          <div class="htrack"><div class="hthumb"></div></div>
          <span class="sbtn"><i class="right"></i></span>
        </div>
      </div>

      <div class="vscroll">
        <span class="sbtn"><i class="up"></i></span>
        <div class="vtrack"><div class="vthumb"></div></div>
        <span class="sbtn"><i class="down"></i></span>
        <svg width="14" height="16" class="dbl"><path d="M4 7.500l3-3.500 3 3.500zM4 11.500l3-3.500 3 3.500z" fill="#555" /></svg>
        <svg width="14" height="16" class="dbl"><path d="M4 4.500l3 3.500 3-3.500zM4 8.500l3 3.500 3-3.500z" fill="#555" /></svg>
      </div>
    </main>

    <footer class="status">
      <span class="s1"><span v-fit="60">Page: 3 of 5</span></span>
      <span class="s2"><span v-fit="51">Caps Lock</span></span>
      <svg class="ptr" width="8" height="13"><path d="M.5.500v10l2.300-2 1.700 4 1.700-.8-1.700-3.700h3z" fill="#555" /></svg>
      <svg class="xy" width="15" height="12" viewBox="0 0 15 12"><path d="M1 1.500h13v9h-13z" fill="#fff" stroke="#555" stroke-width="1.400" /><path d="M1 1h10v7h-10z" fill="#666" /><path d="M3 3l2 3M5 3l-2 3M6.500 3l1.200 3 1.300-3" stroke="#fff" stroke-width=".8" fill="none" /></svg>
      <svg v-glyphs class="views" width="267" height="21" viewBox="657 201 801 63" fill="none">
        <rect x="657" y="201" width="114" height="63" fill="#c6c6c6" />
        <g stroke="#5f5f5f" stroke-width="3">
          <path d="M694.500 211.500h39v36h-39zM700 217.500h29M700 223.500h29M700 229.500h29M700 235.500h29M700 241.500h29" />
          <path d="M808.500 211.500h36v36h-36zM814.500 217.500h10v24h-10zM828.500 217.500h10v24h-10zM814 225.500h25M814 233.500h25" />
          <path d="M900 231h18M1240 231h22M1251 220v22" stroke-width="5" />
          <path d="M1402.500 211.500h36v36h-36z" /><path d="M1414 229.500h-9M1428 229.500h9M1420.500 223v-9M1420.500 236v9M1410 225l-4 4 4 4M1431 225l4 4-4 4M1416 219l4-4 4 4M1416 240l4 4 4-4" stroke-width="2.500" />
        </g>
        <path d="M930 232.500h300M1081.500 225v15" stroke="#a8a8a8" stroke-width="3" />
        <rect x="981" y="213" width="15" height="33" fill="#5a5a5a" />
        <text x="1296" y="241" font-size="33" fill="#3a3a3a" textLength="63">42%</text>
      </svg>
    </footer>

    <footer v-glyphs class="taskbar">
      <svg class="start" width="118.500" height="40" viewBox="0 84 355.500 120" fill="none">
        <path d="M48 126l19-3v20h-19zM70 122l26-3v24h-26zM48 146h19v20l-19-3zM70 146h26v22l-26-3z" fill="#fff" />
        <path d="M199.500 124.500h33v39h-33zM195 129.500h-7v28h7M237 129.500h7v28h-7" stroke="#fff" stroke-width="3" />
        <path d="M307.500 120v48M316.500 120v48" stroke="#33373c" stroke-width="3" />
      </svg>
      <div class="tb"><svg viewBox="393 108 72 72"><path d="M397 118h24l5 6h34v47h-62z" fill="#f4ce62" /><path d="M402 126h58v45h-62z" fill="#ffe694" /><path d="M407 171v-23h43v23h-10v-12h-22v12z" fill="#35a5da" /></svg></div>
      <div class="tb"><svg viewBox="540 108 72 72"><path d="M545 138q0-18 18-24 30-2 38 20 8 14 4 32l-10 4q2-24-8-34l-26 6q-8 6-6 22l-6 6q-8-14-4-32z" fill="#2b2a26" stroke="#77705c" stroke-width="2" /><path d="M562 114l36 21-28 22z" fill="#d3a321" stroke="#efd171" stroke-width="3" /><path d="M573 123l15 12-13 10z" fill="#fff4b0" /><path d="M549 150l4-16M604 160l-4-22" stroke="#b08c26" stroke-width="4" /></svg></div>
      <div class="tb run"><svg viewBox="687 108 72 72"><circle cx="723" cy="144" r="33" fill="#fff" /><path d="M694 127a33 33 0 0 1 58 0h-29a17 17 0 0 0-15 9z" fill="#db4437" /><path d="M694 127a33 33 0 0 0 25 50l14-24a17 17 0 0 1-25-1z" fill="#0f9d58" /><path d="M752 127a33 33 0 0 1-33 50l17-24a17 17 0 0 0-6-26z" fill="#ffcd40" /><circle cx="723" cy="144" r="16" fill="#fff" /><circle cx="723" cy="144" r="12.500" fill="#4285f4" /></svg></div>
      <div class="tb"><svg viewBox="834 108 72 72"><circle cx="870" cy="142" r="32" fill="#d8d8d8" /><path d="M838 142a32 32 0 0 1 32-32v32z" fill="#f5f5f5" /><path d="M870 174a32 32 0 0 1-32-32h32z" fill="#a6a6a6" /><circle cx="870" cy="142" r="20" fill="#ddd" /><circle cx="870" cy="142" r="15" fill="#a00" /></svg></div>
      <div class="tb"><svg viewBox="981 108 72 72"><path d="M993 113h36l11 11v51h-47z" fill="#f6f8fa" stroke="#b8bec4" stroke-width="2" /><path d="M1029 113v11h11" fill="#ccd" /><path d="M998 130h36v32h-36z" fill="#1376bd" /><path d="M1001 160v-8l8-13 8 8 7-9 8 16v6z" fill="#fff" /></svg></div>
      <div class="tb"><svg viewBox="1128 108 72 72"><circle cx="1164" cy="144" r="36" fill="#12abd9" /><rect x="1142" y="128" width="44" height="34" rx="3" fill="#eee" stroke="#555" stroke-width="3" /><path d="M1150 145l5-7 4 8 5-7M1166 148l22-22" stroke="#555" stroke-width="3" fill="none" /><path d="M1144 157h40" stroke="#555" stroke-width="3" /></svg></div>
      <div class="tb run"><svg viewBox="1275 108 72 72"><path d="M1310 124h34v35h-34z" fill="#2788d8" /><path d="M1314 128h28l-15 14zM1315 132l12 13 15-14v26h-27z" fill="#fff" /><path d="M1278 116l38-7v68l-38-7z" fill="#0f6cbd" /><ellipse cx="1297" cy="144" rx="8" ry="10" fill="none" stroke="#fff" stroke-width="6" /></svg></div>
      <div class="tb"><svg viewBox="981 108 72 72"><path d="M993 113h36l11 11v51h-47z" fill="#f6f8fa" stroke="#b8bec4" stroke-width="2" /><path d="M1029 113v11h11" fill="#ccd" /><path d="M998 130h36v32h-36z" fill="#1376bd" /><path d="M1001 160v-8l8-13 8 8 7-9 8 16v6z" fill="#fff" /></svg></div>
      <div class="tb"><svg viewBox="282 108 72 72"><path d="M291 117h28l7 7v51h-26z" fill="#f2cd6e" /><path d="M291 117l12 8v53l-12-8z" fill="#ffe298" /><path d="M313 172q-12-12 3-18 5-14 19-8 5 3 6 9 13 7 4 17z" fill="#0a72cf" stroke="#fff" stroke-width="2" /><path d="M318 165l13-13 12 14" stroke="#fff" stroke-width="3" fill="none" /></svg></div>
      <div class="tb run"><svg viewBox="429 108 72 72"><path d="M465 117h29v54h-29z" fill="#fff" /><path d="M468 123h21M468 131h21M468 139h21M468 147h21M468 155h21M468 163h21" stroke="#2b579a" stroke-width="4" /><path d="M429 116l39-7v69l-39-7z" fill="#2b579a" /><text x="435" y="155" font-size="31" font-weight="700" fill="#fff" textLength="26">W</text></svg></div>
      <div class="tb"><svg viewBox="573 108 72 72"><circle cx="608" cy="142" r="29" fill="#1c2414" stroke="#e4e4e4" stroke-width="4" /><path d="M582 150q22-22 53-20l-2 22q-24-14-47 4z" fill="#8fb53f" /><path d="M586 128l42 30M630 122l-28 22-14 14" stroke="#f3f3f3" stroke-width="8" fill="none" /></svg></div>
      <div class="tb"><svg viewBox="720 108 72 72"><rect x="724" y="111" width="61" height="60" fill="#282940" /><path d="M743 121l33 12-13 32-31-12z" fill="none" stroke="#8ab6cf" stroke-width="2.500" /><circle cx="753" cy="143" r="7" fill="none" stroke="#2e7aa5" stroke-width="5" stroke-dasharray="4 3" /></svg></div>
      <div class="tb"><svg viewBox="867 108 72 72"><circle cx="903" cy="141" r="30" fill="#78b34b" /><path d="M903 127l-19 49M903 127l20 49M884 157q18 9 37 0" fill="none" stroke="#e0e4d9" stroke-width="6" /><path d="M891 150l8-24h8l8 24-6 2-6-12-6 12z" fill="#42544a" /><circle cx="903" cy="132" r="9" fill="#42544a" /><circle cx="903" cy="133" r="3" fill="#9bb98a" /><path d="M903 115v12" stroke="#42544a" stroke-width="6" /></svg></div>
      <div class="tb"><svg viewBox="1014 108 72 72"><path d="M1014 121h17l4-7h31l4 7h16v50h-72z" fill="#fff" /><circle cx="1053" cy="145" r="18" fill="#111" /><circle cx="1050" cy="142" r="13" fill="#fff" /><circle cx="1055" cy="147" r="10" fill="#222" /><path d="M1073 128h5v5h-5z" fill="#111" /></svg></div>
      <div class="tb"><svg viewBox="1161 108 72 72"><rect x="1165" y="121" width="62" height="45" rx="2" fill="#69bfe8" stroke="#a9dcf2" stroke-width="3" /><circle cx="1185" cy="138" r="11" fill="#fff" /><path d="M1185 138v-11a11 11 0 0 1 0 22z" fill="#f2a62c" /><path d="M1206 130h15M1206 140h15M1206 149h15M1204 128v23" stroke="#1779b4" stroke-width="3" /><path d="M1175 158h15" stroke="#f3a33b" stroke-width="4" /><path d="M1193 158h15" stroke="#fff" stroke-width="4" /></svg></div>
      <div class="tb"><svg viewBox="1308 108 72 72"><rect x="1309.500" y="109.500" width="69" height="69" fill="#17212b" stroke="#18a8ff" stroke-width="3" /><path d="M1313 114h13l20 30-20 32h-13l18-32z" fill="#1595ee" /><path d="M1375 114h-13l-12 18 6 10z" fill="#0f6cb4" /><text x="1348" y="174" font-size="18" font-weight="700" fill="#2b77e3" textLength="26">64</text></svg></div>
      <div class="tb run active"><svg viewBox="105 288 72 72"><path d="M144 297h31v53h-31z" fill="#fff" /><path d="M147 306h14M147 315h14M147 324h14M147 336h18M147 343h18M168 302v34h-8M174 298v44" stroke="#0b7a6d" stroke-width="4" fill="none" /><path d="M108 297l39-8v68l-39-7z" fill="#077568" /><text x="117" y="335" font-size="31" font-weight="700" fill="#fff" textLength="19">P</text></svg></div>

      <svg class="tray" width="176" height="40" viewBox="561 264 528 120" fill="none" stroke="#fff">
        <circle cx="598" cy="327" r="29" fill="#0c94d8" stroke-width="5" />
        <text x="586" y="344" font-size="48" font-weight="700" fill="#fff" stroke="none">?</text>
        <circle cx="622" cy="342" r="14" fill="#f4ae29" stroke="none" /><path d="M622 333v3M622 339v12" stroke-width="4" />
        <g stroke-width="3"><circle cx="738" cy="310" r="8" /><path d="M727 334q2-15 12-15 8 1 10 13" /><circle cx="720" cy="325" r="7" /><path d="M709 345q2-13 11-13 9 1 11 13" /></g>
        <path d="M819 333l17-17 18 17" stroke-width="4" />
        <path d="M898 315.500h30v22h-30zM930 321v10" stroke-width="3" /><path d="M902 319h19v15h-19z" fill="#fff" stroke="none" /><path d="M886 312h14v8q-7 7-14 0zM889 306v6M897 306v6M893 322q0 10 6 11" fill="#fff" stroke-width="2.500" />
        <g stroke-width="3"><path d="M968 342q3-30 34-31" stroke="#888" /><path d="M977 343q2-22 25-24M985 343q2-13 17-15" /><path d="M993 343q1-6 9-7" /></g><circle cx="998" cy="341" r="4" fill="#fff" stroke="none" />
        <path d="M1030 318h7l11-10v34l-11-10h-7zM1054 317q5 8 0 16M1061 312q8 13 0 26M1068 307q12 18 0 36" stroke-width="3" />
      </svg>
      <div class="clock"><span v-fit="26">10:06</span><span v-fit="58">11/04/2018</span></div>
      <svg width="53" height="40" viewBox="1299 264 159 120">
        <path d="M1336 300h47v39h-31l-8 9v-9h-8z" fill="#fff" /><path d="M1344 309.500h31M1344 318.500h31M1344 327.500h31" stroke="#111" stroke-width="3" />
        <circle cx="1382" cy="346" r="26" fill="#2b2e32" stroke="#85888b" stroke-width="3" /><text x="1366" y="357" font-size="32" fill="#fff" textLength="31">15</text>
        <path d="M1444.500 264v120" stroke="#55585c" stroke-width="3" />
      </svg>
    </footer>
  </div>
</template>

<style>
html, body { margin: 0; overflow: hidden; }
</style>

<style scoped>
* { box-sizing: border-box; }
.app { width: 1366px; height: 768px; display: flex; flex-direction: column; overflow: hidden; font-family: "Open Sans", "Noto Sans", sans-serif; font-size: 12px; color: #262626; background: #f0f0f0; white-space: nowrap; }
svg { display: block; flex: none; }
.top { position: relative; height: 64px; flex: none; background: #077568; color: #fff; }
.art { position: absolute; right: 0; top: 0; }
.titlebar { position: relative; height: 34px; display: grid; grid-template-columns: 1fr auto 1fr; }
.qat { margin-left: 18px; }
.title { line-height: 32px; }
.window { display: flex; justify-content: flex-end; line-height: 32px; }
.user { margin-right: 11px; }
.wbtn { width: 46px; text-align: center; }
.q { font-size: 13px; }
.tabs { position: relative; display: flex; height: 30px; line-height: 30px; }
.file { width: 61px; padding-left: 20px; }
.home { width: 60px; padding-left: 13px; background: #f3f3f3; color: #077568; }
.tab { padding: 0 14px 0 15px; }
.ribbon { height: 93px; flex: none; display: flex; background: #f3f3f3; border-bottom: 1px solid #d0d0d0; }
.group { position: relative; flex: none; height: 92px; }
.group::after { content: ""; position: absolute; right: 0; top: 4px; width: 1px; height: 84px; background: #d4d4d4; }
.g-clip { width: 158px; } .g-font { width: 242px; } .g-para { width: 201px; } .g-styles { width: 51px; }
.g-obj { width: 188px; } .g-arr { width: 249px; } .g-edit { width: 79px; }
.body { height: 76px; display: flex; }
.center { justify-content: center; }
.g-obj .body, .g-arr .body { padding-left: 4px; }
.cap { display: flex; align-items: center; height: 16px; line-height: 16px; }
.ct { flex: 1; text-align: center; }
.big { width: 50px; padding-top: 6px; display: flex; flex-direction: column; align-items: center; }
.paste { width: 49px; }
.b47 { width: 47px; } .b48 { width: 48px; } .b42 { width: 42px; } .b40 { width: 40px; } .b41 { width: 41px; }
.lab { margin-top: 3px; height: 16px; line-height: 16px; }
.sub { height: 16px; line-height: 16px; display: flex; align-items: center; }
.arr { width: 0; height: 0; border: 3px solid transparent; border-top: 3px solid #666; border-bottom: 0; margin-left: 3px; }
.sub > .arr { margin-left: 0; }
.sub > .arr.inl { margin-left: 2px; }
.arr.gap { margin-left: 10px; }
.off { color: #b1b1b1; }
.off .arr { border-top-color: #bdbdbd; }
.rows { padding-top: 3px; }
.row { height: 23px; display: flex; align-items: center; }
.row > svg { margin-right: 3px; }
.g-arr .c1 { width: 126px; padding-left: 4px; }
.g-arr .c2 .row > svg { margin-right: 2px; }
.c2 { margin-left: -1px; }
.g-edit .rows { padding-left: 7px; }
.g-edit .row > svg { margin-right: 2px; }
.serif { font-family: "Liberation Serif", serif; }
.tail { flex: 1; display: flex; justify-content: flex-end; align-items: flex-end; padding: 0 9px 3px 0; }
.work { flex: 1; display: flex; min-height: 0; background: #f0f0f0; }
.pages { width: 141px; flex: none; display: flex; background: #e6e6e6; border-right: 2px solid #cdcdcd; }
.plist { width: 122px; padding-left: 8px; }
h2 { margin: 0 0 0 -1px; padding-top: 8px; height: 37px; font-size: 21px; line-height: 29px; font-weight: 400; color: #077568; }
.mark { margin: 3px 0 7px; }
.thumb { width: 107px; height: 162px; margin-bottom: 4px; padding: 2px; border: 1px solid transparent; }
.thumb.sel { background: #d7eeea; border-color: #93cbc1; }
.thumb b { display: block; text-align: center; font-size: 12px; line-height: 15px; font-weight: 600; }
.heavy { stroke: #000; stroke-width: .7px; }
.pscroll { width: 15px; padding-top: 42px; display: flex; flex-direction: column; height: 545px; }
.ptrack { flex: 1; background: #dadada; padding-top: 4px; }
.pthumb { height: 281px; background: #fff; border: 1px solid #ababab; }
.sbtn { width: 15px; height: 15px; flex: none; background: #fff; border: 1px solid #ababab; display: flex; align-items: center; justify-content: center; }
.sbtn i { width: 0; height: 0; border: 4px solid transparent; }
.up { border-top: 0 !important; border-bottom-color: #666 !important; }
.down { border-bottom: 0 !important; border-top-color: #666 !important; }
.left { border-left: 0 !important; border-right-color: #666 !important; }
.right { border-right: 0 !important; border-left-color: #666 !important; }
.editor { width: 1209px; display: flex; flex-direction: column; }
.mid { display: flex; height: 507px; }
.canvas { flex: 1; padding: 19px 0 0 426px; }
.pub { font-family: Lato, sans-serif; }
.hscroll { display: flex; padding: 1px 1px 0 1px; height: 17px; }
.htrack { flex: 1; background: #e4e4e4; height: 15px; margin-right: 2px; padding-left: 117px; }
.hthumb { width: 922px; height: 15px; background: #fff; border: 1px solid #ababab; }
.vscroll { width: 16px; padding-top: 2px; display: flex; flex-direction: column; }
.vtrack { height: 464px; background: #e6e6e6; padding-top: 103px; width: 15px; }
.vthumb { height: 246px; background: #fff; border: 1px solid #ababab; }
.dbl { margin: 1px 0 0 1px; background: #e8e8e8; }
.status { height: 22px; flex: none; display: flex; border-top: 1px solid #c6c6c6; background: #f3f3f3; line-height: 18px; font-size: 11px; color: #333; }
.s1 { width: 83px; padding-left: 8px; }
.s2 { width: 74px; line-height: 20px; }
.ptr { margin-top: 4px; }
.xy { margin: 4px 0 0 107px; }
.views { margin-left: auto; }
.taskbar { height: 40px; flex: none; display: flex; background: #02050b; color: #fff; }
.tb { width: 49px; height: 40px; padding: 8px 12.5px; position: relative; }
.tb svg { width: 24px; height: 24px; }
.run::after { content: ""; position: absolute; bottom: 0; left: 4.5px; width: 40px; height: 2px; background: #a9d6f5; }
.active { background: #34383b; }
.active::after { left: 0; width: 49px; }
.tray { margin-left: auto; }
.clock { width: 70px; padding-top: 2px; display: flex; flex-direction: column; align-items: center; line-height: 18px; }
</style>
